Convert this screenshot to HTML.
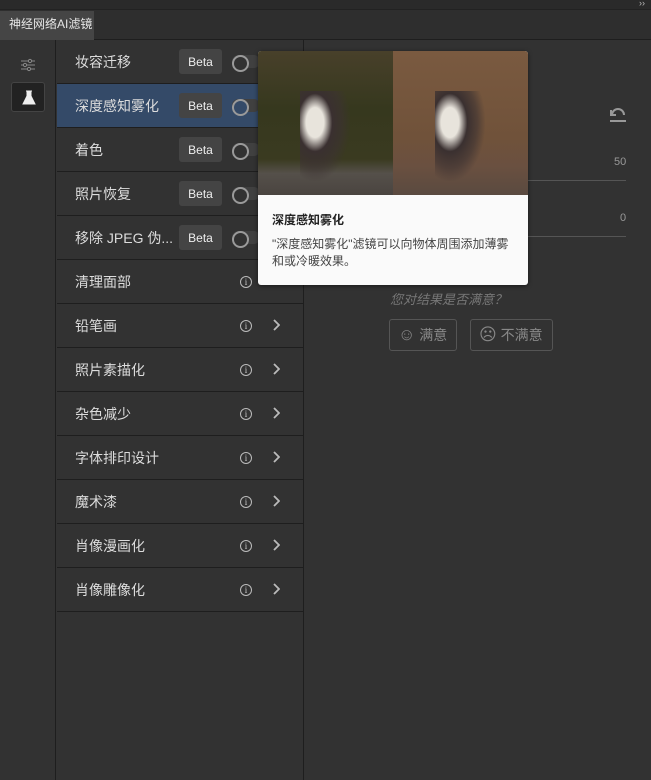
<!DOCTYPE html>
<html><head><meta charset="utf-8"><style>
*{margin:0;padding:0;box-sizing:border-box}
body{width:651px;height:780px;background:#323232;font-family:"Liberation Sans","Noto Sans CJK SC",sans-serif;color:#d6d6d6;position:relative;overflow:hidden}
.top{position:absolute;left:0;top:0;width:651px;height:10px;background:#2a2a2a;border-bottom:1px solid #222}
.tabbar{position:absolute;left:0;top:10px;width:651px;height:30px;background:#2e2e2e;border-bottom:1px solid #1e1e1e}
.tab{position:absolute;left:0;top:1px;width:94px;height:29px;background:#454545;color:#e6e6e6;font-size:12px;line-height:27px;padding-left:9px}
.side{position:absolute;left:0;top:40px;width:56px;height:740px;background:#323232;border-right:1px solid #1e1e1e}
.list{position:absolute;left:57px;top:40px;width:247px;border-right:1px solid #1e1e1e;height:740px}
.row{height:44px;border-bottom:1px solid #1e1e1e;position:relative;font-size:14px;line-height:45px;padding-left:18px;color:#dcdcdc}
.row.sel{background:#344a68}
.beta{position:absolute;left:122px;top:9px;width:43px;height:25px;background:#444;border-radius:3px;font-size:12px;line-height:26px;text-align:center;color:#eee}
.sw{position:absolute;left:175px;top:15px;width:28px;height:13px;border-radius:7px;background:#404040}
.sw:before{content:"";position:absolute;left:0;top:0;width:13px;height:13px;border:2px solid #9a9a9a;border-radius:50%;background:#323232}
.sel .sw:before{background:#344a68}
.info{position:absolute;left:183px;top:16px;width:12px;height:12px;border:1px solid #bbb;border-radius:50%;font-size:9px;line-height:10px;text-align:center;color:#ccc;font-family:"Liberation Serif",serif}
.chev{position:absolute;left:215px;top:15px}
.pop{position:absolute;left:258px;top:51px;width:270px;height:234px;background:#fafafa;border-radius:3px;overflow:hidden;box-shadow:0 1px 4px rgba(0,0,0,.5)}
.img{height:144px;display:flex}
.l{flex:1;background:linear-gradient(#48402a,#36381e 40%,#3a3a20 75%,#55504a 85%,#4a4440)}
.r{flex:1;background:linear-gradient(#7a5a40,#70523a 60%,#6a5040 80%,#5a4a40)}
.pt{font-size:12px;font-weight:bold;color:#222;padding:16px 0 0 14px}
.pd{font-size:12px;color:#444;padding:8px 14px 0 14px;line-height:17px}
.right{position:absolute;left:304px;top:40px;right:0;bottom:0}
</style></head><body>
<div class="top"></div>
<div class="tabbar"><div class="tab">神经网络AI滤镜</div><div style="position:absolute;right:6px;top:-12px;color:#bbb;font-size:9px">››</div></div>
<div class="side">
<svg style="position:absolute;left:20px;top:18px" width="16" height="14" viewBox="0 0 16 14" stroke="#888" fill="none"><path d="M1 3h14M1 7h14M1 11h14"/><circle cx="10" cy="3" r="1.6" fill="#323232"/><circle cx="5" cy="7" r="1.6" fill="#323232"/><circle cx="9" cy="11" r="1.6" fill="#323232"/></svg>
<div style="position:absolute;left:11px;top:42px;width:34px;height:30px;background:#222;border:1px solid #444;border-radius:3px"><svg style="position:absolute;left:10px;top:7px" width="14" height="15" viewBox="0 0 14 15"><path d="M4 1h6M5 1v5L1 14h12L9 6V1" fill="#eee" stroke="#eee"/></svg></div>
</div>
<div class="list">
<div class="row">妆容迁移<span class="beta">Beta</span><span class="sw"></span></div>
<div class="row sel">深度感知雾化<span class="beta">Beta</span><span class="sw"></span></div>
<div class="row">着色<span class="beta">Beta</span><span class="sw"></span></div>
<div class="row">照片恢复<span class="beta">Beta</span><span class="sw"></span></div>
<div class="row">移除 JPEG 伪...<span class="beta">Beta</span><span class="sw"></span></div>
<div class="row">清理面部<span class="info">i</span></div>
<div class="row">铅笔画<span class="info">i</span><svg class="chev" width="8" height="12" viewBox="0 0 8 12"><path d="M2 1l5 5-5 5" fill="none" stroke="#bbb" stroke-width="1.8"/></svg></div>
<div class="row">照片素描化<span class="info">i</span><svg class="chev" width="8" height="12" viewBox="0 0 8 12"><path d="M2 1l5 5-5 5" fill="none" stroke="#bbb" stroke-width="1.8"/></svg></div>
<div class="row">杂色减少<span class="info">i</span><svg class="chev" width="8" height="12" viewBox="0 0 8 12"><path d="M2 1l5 5-5 5" fill="none" stroke="#bbb" stroke-width="1.8"/></svg></div>
<div class="row">字体排印设计<span class="info">i</span><svg class="chev" width="8" height="12" viewBox="0 0 8 12"><path d="M2 1l5 5-5 5" fill="none" stroke="#bbb" stroke-width="1.8"/></svg></div>
<div class="row">魔术漆<span class="info">i</span><svg class="chev" width="8" height="12" viewBox="0 0 8 12"><path d="M2 1l5 5-5 5" fill="none" stroke="#bbb" stroke-width="1.8"/></svg></div>
<div class="row">肖像漫画化<span class="info">i</span><svg class="chev" width="8" height="12" viewBox="0 0 8 12"><path d="M2 1l5 5-5 5" fill="none" stroke="#bbb" stroke-width="1.8"/></svg></div>
<div class="row">肖像雕像化<span class="info">i</span><svg class="chev" width="8" height="12" viewBox="0 0 8 12"><path d="M2 1l5 5-5 5" fill="none" stroke="#bbb" stroke-width="1.8"/></svg></div>
</div>
<div class="right">
<svg style="position:absolute;left:305px;top:66px" width="18" height="16" viewBox="0 0 18 16" fill="none" stroke="#999" stroke-width="2"><path d="M3 9a6 6 0 0 1 12 0M1 15h16M2 4v5h5"/></svg>
<div style="position:absolute;left:310px;top:116px;font-size:11px;color:#999">50</div>
<div style="position:absolute;left:224px;top:140px;width:98px;height:1px;background:#555"></div>
<div style="position:absolute;left:316px;top:172px;font-size:11px;color:#999">0</div>
<div style="position:absolute;left:224px;top:196px;width:98px;height:1px;background:#555"></div>
<div style="position:absolute;left:86px;top:249px;font-size:13px;color:#777;font-style:italic">您对结果是否满意？</div>
<div style="position:absolute;left:85px;top:279px;width:68px;height:32px;border:1px solid #555;border-radius:3px;color:#888;font-size:14px;line-height:30px;padding-left:8px"><span style="font-size:17px">☺</span> 满意</div>
<div style="position:absolute;left:166px;top:279px;width:83px;height:32px;border:1px solid #555;border-radius:3px;color:#888;font-size:14px;line-height:30px;padding-left:8px"><span style="font-size:17px">☹</span> 不满意</div>
</div>
<div class="pop">
<div class="img"><div class="l" style="position:relative"><div style="position:absolute;left:42px;top:40px;width:50px;height:90px;background:radial-gradient(ellipse at 30% 35%,#e8e4dc 0 18%,#3a3030 35%,rgba(60,50,50,.6) 55%,transparent 72%)"></div></div><div class="r" style="position:relative"><div style="position:absolute;left:42px;top:40px;width:50px;height:90px;background:radial-gradient(ellipse at 30% 35%,#e8e4dc 0 18%,#3a3030 35%,rgba(60,50,50,.6) 55%,transparent 72%)"></div></div></div>
<div class="pt">深度感知雾化</div>
<div class="pd">"深度感知雾化"滤镜可以向物体周围添加薄雾和或冷暖效果。</div>
</div>
</body></html>
